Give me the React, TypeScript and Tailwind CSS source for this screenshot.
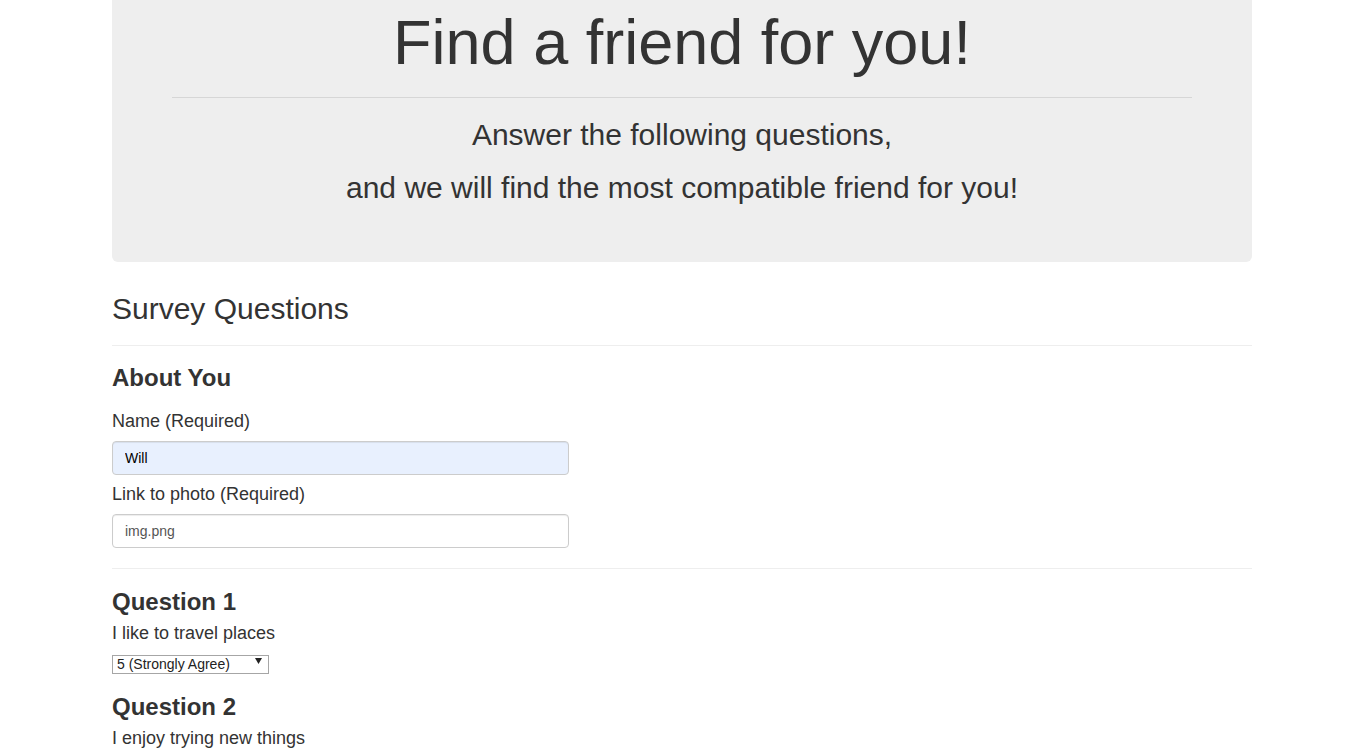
import React from "react";

const questions = [
  { title: "Question 1", text: "I like to travel places", value: "5" },
  { title: "Question 2", text: "I enjoy trying new things", value: "5" },
];

function Select({ value }: { value: string }) {
  return (
    <div className="relative w-[157px] h-[19px] mt-[6px]">
      <select
        defaultValue={value}
        className="appearance-none w-full h-full border border-[#a6a6a6] bg-white pl-[4px] text-[14px] leading-[17px] text-[#222] outline-none"
      >
        <option value="1">1 (Strongly Disagree)</option>
        <option value="2">2</option>
        <option value="3">3</option>
        <option value="4">4</option>
        <option value="5">5 (Strongly Agree)</option>
      </select>
      <svg
        className="absolute right-[7px] top-[6px] pointer-events-none"
        width="7"
        height="6"
        viewBox="0 0 7 6"
      >
        <path d="M0 0 L7 0 L3.5 6 Z" fill="#222" />
      </svg>
    </div>
  );
}

export default function App() {
  return (
    <div className="min-h-screen bg-white text-[#333] font-['Liberation_Sans',Arial,sans-serif] overflow-hidden">
      <div className="ml-[112px] w-[1140px]">
        {/* Jumbotron */}
        <div className="rounded-b-[6px] bg-[#eee] px-[60px] pt-[8px] pb-[48px] text-center">
          <h1 className="text-[63px] leading-[69px]">Find a friend for you!</h1>
          <hr className="mt-[20px] border-0 border-t border-[#d6d6d6]" />
          <p className="mt-[10px] text-[30px] leading-[53px]">
            Answer the following questions,
          </p>
          <p className="text-[30px] leading-[53px]">
            and we will find the most compatible friend for you!
          </p>
        </div>

        {/* Survey */}
        <h2 className="mt-[30px] pb-[20px] border-b border-[#eee] text-[30px] leading-[33px]">
          Survey Questions
        </h2>

        <h3 className="mt-[19px] text-[24px] leading-[26px] font-bold">About You</h3>
        <label className="block mt-[17px] text-[18px] leading-[26px]">Name (Required)</label>
        <input
          defaultValue="Will"
          className="block mt-[7px] w-[457px] h-[34px] rounded-[4px] border border-[#ccc] bg-[#e8f0fe] px-[12px] text-[14px] text-black shadow-[inset_0_1px_1px_rgba(0,0,0,0.075)] outline-none"
        />
        <label className="block mt-[6px] text-[18px] leading-[26px]">
          Link to photo (Required)
        </label>
        <input
          defaultValue="img.png"
          className="block mt-[7px] w-[457px] h-[34px] rounded-[4px] border border-[#ccc] bg-white px-[12px] text-[14px] text-[#555] shadow-[inset_0_1px_1px_rgba(0,0,0,0.075)] outline-none"
        />

        <hr className="mt-[20px] border-0 border-t border-[#eee]" />

        {questions.map((q, i) => (
          <div key={q.title} className={i === 0 ? "mt-[20px]" : "mt-[23px]"}>
            <h3 className="text-[24px] leading-[26px] font-bold">{q.title}</h3>
            <p className="mt-[5px] text-[18px] leading-[26px]">{q.text}</p>
            <Select value={q.value} />
          </div>
        ))}
      </div>
    </div>
  );
}
